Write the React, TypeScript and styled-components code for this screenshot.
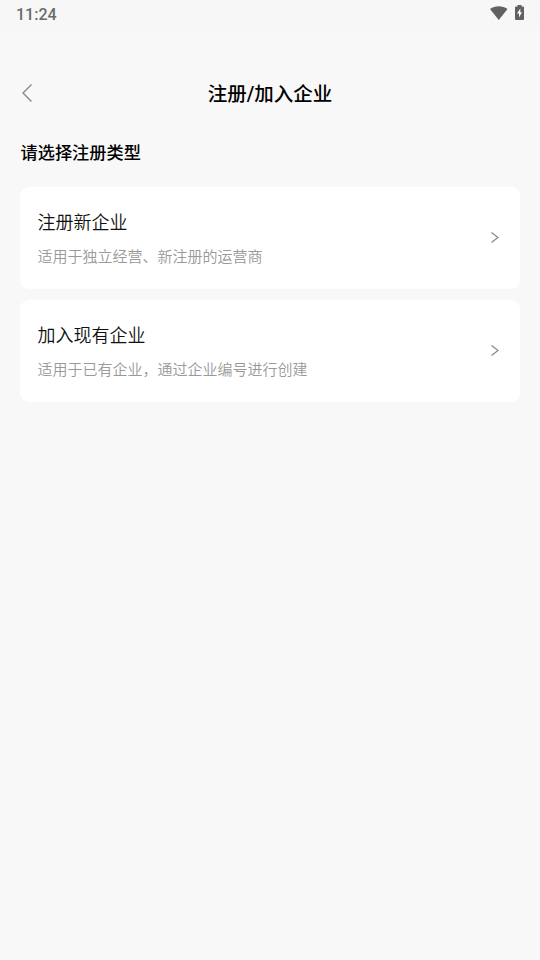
import React from 'react';
import styled, { createGlobalStyle } from 'styled-components';

const Global = createGlobalStyle`
  * { box-sizing: border-box; }
  body { margin: 0; background: #f8f8f8; font-family: Roboto, "Noto Sans CJK SC", sans-serif; }
`;
const Page = styled.div`
  width: 100%; min-height: 960px; background: #f8f8f8; color: #000;
`;
const StatusBar = styled.div`
  height: 27px; display: flex; align-items: flex-start; justify-content: space-between;
  padding: 0 16px; background: #f7f7f7; color: #6a6a6a;
`;
const Clock = styled.span`font-size: 16px; font-weight: 500; line-height: 28px; padding-top: 1px;`;
const StatusIcons = styled.div`display: flex; align-items: center; gap: 7px; height: 25px;`;
const Header = styled.header`
  margin-top: 38px; height: 56px; padding: 0 20px;
  display: grid; grid-template-columns: 40px 1fr 40px; align-items: center;
`;
const BackButton = styled.button`
  border: 0; background: none; padding: 0; display: flex; color: #888;
`;
const Title = styled.h1`
  margin: 0; padding-top: 3px; font-size: 19.5px; font-weight: 500; line-height: 28px; text-align: center;
`;
const Content = styled.main`padding: 19px 20px 0;`;
const Prompt = styled.h2`
  margin: 0 0 21px 0.5px; font-size: 17.2px; font-weight: 500; line-height: 26px;
`;
const Options = styled.div`display: flex; flex-direction: column; gap: 11px;`;
const Card = styled.button`
  width: 100%; height: 102px; border: 0; border-radius: 9px; background: #fff; padding: 0 20px 0 17.5px;
  display: flex; align-items: center; justify-content: space-between; text-align: left;
  font-family: inherit; color: #111;
`;
const CardText = styled.span`display: flex; flex-direction: column; gap: 9px; padding-top: 1px;`;
const CardTitle = styled.span`font-size: 18px; font-weight: 350; line-height: 28px;`;
const CardNote = styled.span`font-size: 15px; font-weight: 350; line-height: 22px; color: #999;`;

const Chevron = () => (
  <svg width="10" height="14" viewBox="0 0 10 14" fill="none" stroke="#888" strokeWidth="1.2">
    <path d="M1.5 1.500 8 6.500l-6.5 5" />
  </svg>
);

const options = [
  { title: '注册新企业', note: '适用于独立经营、新注册的运营商' },
  { title: '加入现有企业', note: '适用于已有企业，通过企业编号进行创建' },
];

export default function App() {
  return (
    <Page lang="zh-CN">
      <Global />
      <StatusBar>
        <Clock>11:24</Clock>
        <StatusIcons>
          <svg width="18" height="14" viewBox="0 0 18 14"><path d="M0 3C5-.8 12.5-.8 17.5 3L8.75 14Z" fill="#616161" /></svg>
          <svg width="9" height="15" viewBox="0 0 9 15">
            <path d="M2.5 0h4v1.5H8q1 0 1 1V14q0 1-1 1H1q-1 0-1-1V2.5q0-1 1-1h1.5Z" fill="#616161" />
            <path d="M5.3 3.5 2 8.6h2V12.5L7 7.3H5.3Z" fill="#fafafa" />
          </svg>
        </StatusIcons>
      </StatusBar>
      <Header>
        <BackButton aria-label="返回">
          <svg width="14" height="20" viewBox="0 0 14 20" fill="none" stroke="currentColor" strokeWidth="1.4">
            <path d="M11.5 1.5 3 10l8.5 8.5" />
          </svg>
        </BackButton>
        <Title>注册/加入企业</Title>
      </Header>
      <Content>
        <Prompt>请选择注册类型</Prompt>
        <Options>
          {options.map((o) => (
            <Card key={o.title}>
              <CardText>
                <CardTitle>{o.title}</CardTitle>
                <CardNote>{o.note}</CardNote>
              </CardText>
              <Chevron />
            </Card>
          ))}
        </Options>
      </Content>
    </Page>
  );
}
